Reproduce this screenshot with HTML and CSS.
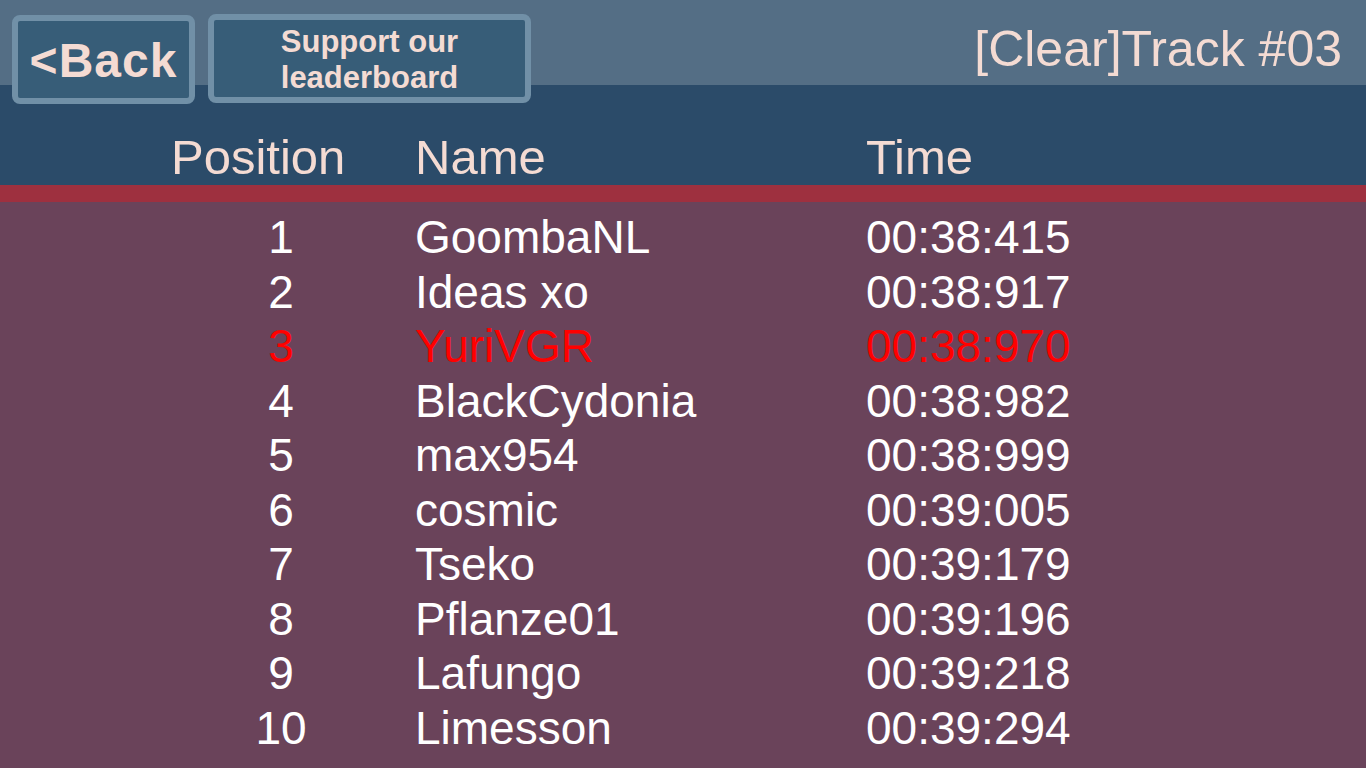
FILE: index.html
```html
<!DOCTYPE html>
<html>
<head>
<meta charset="utf-8">
<link rel="stylesheet" href="styles.css">
</head>
<body>
<div class="screen">
  <header class="header">
    <div class="topbar">
      <button class="btn btn-back">&lt;Back</button>
      <button class="btn btn-support">Support our<br>leaderboard</button>
      <div class="title">[Clear]Track #03</div>
    </div>
    <div class="colheads">
      <div class="h-pos">Position</div>
      <div class="h-name">Name</div>
      <div class="h-time">Time</div>
    </div>
  </header>
  <div class="stripe"></div>
  <main class="list">
    <div class="row"><div class="pos">1</div><div class="name">GoombaNL</div><div class="time">00:38:415</div></div>
    <div class="row"><div class="pos">2</div><div class="name">Ideas xo</div><div class="time">00:38:917</div></div>
    <div class="row me"><div class="pos">3</div><div class="name">YuriVGR</div><div class="time">00:38:970</div></div>
    <div class="row"><div class="pos">4</div><div class="name">BlackCydonia</div><div class="time">00:38:982</div></div>
    <div class="row"><div class="pos">5</div><div class="name">max954</div><div class="time">00:38:999</div></div>
    <div class="row"><div class="pos">6</div><div class="name">cosmic</div><div class="time">00:39:005</div></div>
    <div class="row"><div class="pos">7</div><div class="name">Tseko</div><div class="time">00:39:179</div></div>
    <div class="row"><div class="pos">8</div><div class="name">Pflanze01</div><div class="time">00:39:196</div></div>
    <div class="row"><div class="pos">9</div><div class="name">Lafungo</div><div class="time">00:39:218</div></div>
    <div class="row"><div class="pos">10</div><div class="name">Limesson</div><div class="time">00:39:294</div></div>
  </main>
</div>
</body>
</html>
```
FILE: styles.css
```css
* { box-sizing: border-box; }
html, body {
  margin: 0;
  padding: 0;
  width: 1366px;
  height: 768px;
  overflow: hidden;
  background: #6a435a;
  font-family: "Liberation Sans", Arial, sans-serif;
}
.screen {
  width: 1366px;
  height: 768px;
  display: flex;
  flex-direction: column;
}
.header {
  height: 185px;
  background: linear-gradient(to bottom, #546e85 0, #546e85 85px, #2b4b69 85px, #2b4b69 100%);
  display: flex;
  flex-direction: column;
}
.topbar {
  display: flex;
  align-items: flex-start;
  padding: 14px 24px 0 12px;
  height: 103px;
}
.btn {
  font-family: "Liberation Sans", Arial, sans-serif;
  font-weight: bold;
  color: #f4dbd3;
  background: #375d78;
  border: 6px solid #7190a7;
  border-radius: 8px;
  padding: 0;
  margin: 0;
  display: flex;
  align-items: center;
  justify-content: center;
  text-align: center;
}
.btn-back {
  width: 183px;
  height: 89px;
  margin-top: 1px;
  font-size: 48px;
  letter-spacing: 1px;
  padding-top: 2px;
}
.btn-support {
  width: 323px;
  height: 89px;
  margin-left: 13px;
  font-size: 31px;
  line-height: 36px;
  padding-top: 3px;
}
.title {
  margin-left: auto;
  margin-top: 7px;
  font-size: 50px;
  line-height: 56px;
  color: #f4dbd3;
}
.colheads {
  flex: 1;
  display: flex;
  align-items: flex-end;
  padding-left: 171px;
  font-size: 49px;
  line-height: 56px;
  color: #f4dbd3;
}
.h-pos { width: 244px; }
.h-name { width: 451px; }
.stripe {
  height: 17px;
  background: #9e303f;
}
.list {
  padding-top: 8px;
  font-size: 46px;
  line-height: 54.5px;
  color: #ffffff;
}
.row {
  display: flex;
  padding-left: 200px;
}
.pos { width: 162px; text-align: center; }
.name { width: 504px; padding-left: 53px; }
.row.me { color: #ff0000; }
```
